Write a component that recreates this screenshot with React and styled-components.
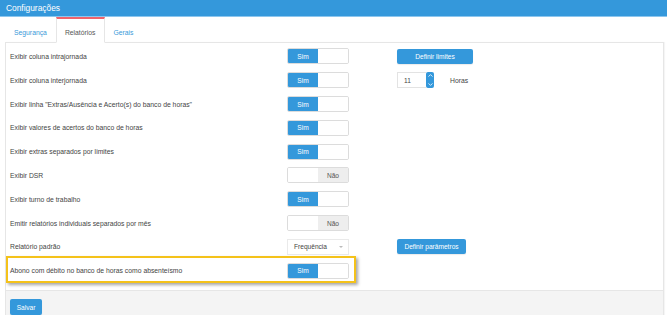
import React from "react";
import styled, { createGlobalStyle, css } from "styled-components";

const GlobalStyle = createGlobalStyle`
  html, body {
    margin: 0;
    padding: 0;
    background: #fff;
    font-family: "Liberation Sans", Arial, sans-serif;
  }
`;

const BLUE = "#3498db";

const Page = styled.div`
  width: 667px;
  height: 315px;
  overflow: hidden;
`;

const Header = styled.div`
  height: 16px;
  background: ${BLUE};
  border-bottom: 1px solid #8cc6ee;
  display: flex;
  align-items: center;
  padding-left: 6px;
  color: #fff;
  font-size: 8.4px;
`;

const Main = styled.div`
  width: 659px;
  margin-left: 5px;
`;

const Tabs = styled.div`
  display: flex;
  height: 25px;
`;

const Tab = styled.div`
  padding: 9px 8px 0;
  font-size: 6.8px;
  line-height: 10px;
  color: #3a9ad9;
  border: 1px solid transparent;
  border-top: 2px solid transparent;
  box-sizing: border-box;
  height: 26px;
  position: relative;
  z-index: 1;

  ${p =>
    p.$active &&
    css`
      color: #555;
      background: #fff;
      border-color: #e6e6e6;
      border-bottom-color: #fff;
      border-top: 2px solid #f0636b;
    `}
`;

const Card = styled.div`
  border: 1px solid #e6e6e6;
  border-bottom: none;
  box-shadow: 1px 0 1px rgba(0, 0, 0, 0.04);
`;

const Panel = styled.div`
  padding: 1.5px 0 7.3px 4px;
`;

const Row = styled.div`
  position: relative;
  display: grid;
  grid-template-columns: 277px 62px auto;
  align-items: center;
  height: 23.82px;

  ${p =>
    p.$highlight &&
    css`
      &::after {
        content: "";
        position: absolute;
        left: -4px;
        top: -3px;
        width: 350px;
        height: 27px;
        box-sizing: border-box;
        border: 2px solid #f4c21a;
        box-shadow: 2px 2px 3px rgba(0, 0, 0, 0.35);
        pointer-events: none;
      }
    `}
`;

const Label = styled.div`
  font-size: 6.8px;
  color: #444;
  white-space: nowrap;
`;

const Toggle = styled.div`
  display: flex;
  width: 62px;
  height: 16px;
  box-sizing: border-box;
  border: 1px solid #dcdcdc;
  border-radius: 2px;
  overflow: hidden;
`;

const Half = styled.div`
  flex: 1;
  display: flex;
  align-items: center;
  justify-content: center;
  font-size: 6.6px;
  background: ${p => (p.$on ? BLUE : p.$off ? "#eeeeee" : "#fff")};
  color: ${p => (p.$on ? "#fff" : "#555")};
`;

const Extra = styled.div`
  display: flex;
  align-items: center;
  margin-left: 48px;
`;

const Button = styled.button`
  height: ${p => p.$h || 15}px;
  padding: 0;
  width: ${p => p.$w}px;
  border: none;
  border-radius: 2px;
  background: ${BLUE};
  color: #fff;
  font-family: inherit;
  font-size: 6.6px;
  box-shadow: 0 1px 1px rgba(0, 0, 0, 0.08);
`;

const NumberBox = styled.div`
  width: 29px;
  height: 16px;
  box-sizing: border-box;
  border: 1px solid #e3e3e3;
  border-right: none;
  display: flex;
  align-items: center;
  padding-left: 6px;
  font-size: 6.6px;
  color: #444;
`;

const Spinner = styled.div`
  width: 8px;
  height: 16px;
  background: ${BLUE};
  border-radius: 2px;
  display: flex;
  flex-direction: column;
  align-items: center;
  justify-content: space-between;
  padding: 2px 0;
  box-sizing: border-box;
`;

const Unit = styled.span`
  margin-left: 16px;
  font-size: 6.8px;
  color: #444;
`;

const Select = styled.div`
  width: 62px;
  height: 16px;
  box-sizing: border-box;
  border: 1px solid #eaeaea;
  display: flex;
  align-items: center;
  justify-content: space-between;
  padding: 0 5px 0 6px;
  font-size: 6.6px;
  color: #444;
`;

const Caret = styled.span`
  width: 0;
  height: 0;
  border-left: 2px solid transparent;
  border-right: 2px solid transparent;
  border-top: 2px solid #bbb;
`;

const Footer = styled.div`
  background: #f4f4f4;
  border-top: 1px solid #e6e6e6;
  height: 30px;
  padding: 5px 0 0 4px;
  box-sizing: border-box;
`;

const Chevron = ({ up }) => (
  <svg width="5" height="3" viewBox="0 0 5 3">
    <path
      d={up ? "M0.5 2.6 L2.5 0.6 L4.5 2.6" : "M0.5 0.4 L2.5 2.4 L4.5 0.4"}
      fill="none"
      stroke="#fff"
      strokeWidth="0.8"
    />
  </svg>
);

const Switch = ({ on }) => (
  <Toggle>
    {on ? (
      <>
        <Half $on>Sim</Half>
        <Half />
      </>
    ) : (
      <>
        <Half />
        <Half $off>Não</Half>
      </>
    )}
  </Toggle>
);

const rows = [
  { label: "Exibir coluna intrajornada", on: true, extra: "limites" },
  { label: "Exibir coluna interjornada", on: true, extra: "horas" },
  { label: 'Exibir linha "Extras/Ausência e Acerto(s) do banco de horas"', on: true },
  { label: "Exibir valores de acertos do banco de horas", on: true },
  { label: "Exibir extras separados por limites", on: true },
  { label: "Exibir DSR", on: false },
  { label: "Exibir turno de trabalho", on: true },
  { label: "Emitir relatórios individuais separados por mês", on: false },
  { label: "Relatório padrão", select: "Frequência", extra: "parametros" },
  { label: "Abono com débito no banco de horas como absenteísmo", on: true, highlight: true }
];

const renderExtra = extra => {
  if (extra === "limites") return <Button $w={76}>Definir limites</Button>;
  if (extra === "parametros") return <Button $w={69}>Definir parâmetros</Button>;
  if (extra === "horas")
    return (
      <>
        <NumberBox>11</NumberBox>
        <Spinner>
          <Chevron up />
          <Chevron />
        </Spinner>
        <Unit>Horas</Unit>
      </>
    );
  return null;
};

export default function App() {
  return (
    <Page>
      <GlobalStyle />
      <Header>Configurações</Header>
      <Main>
        <Tabs>
          <Tab>Segurança</Tab>
          <Tab $active>Relatórios</Tab>
          <Tab>Gerais</Tab>
        </Tabs>
        <Card>
          <Panel>
            {rows.map(r => (
              <Row key={r.label} $highlight={r.highlight}>
                <Label>{r.label}</Label>
                {r.select ? (
                  <Select>
                    {r.select}
                    <Caret />
                  </Select>
                ) : (
                  <Switch on={r.on} />
                )}
                <Extra>{renderExtra(r.extra)}</Extra>
              </Row>
            ))}
          </Panel>
          <Footer>
            <Button $w={32} $h={16}>Salvar</Button>
          </Footer>
        </Card>
      </Main>
    </Page>
  );
}
